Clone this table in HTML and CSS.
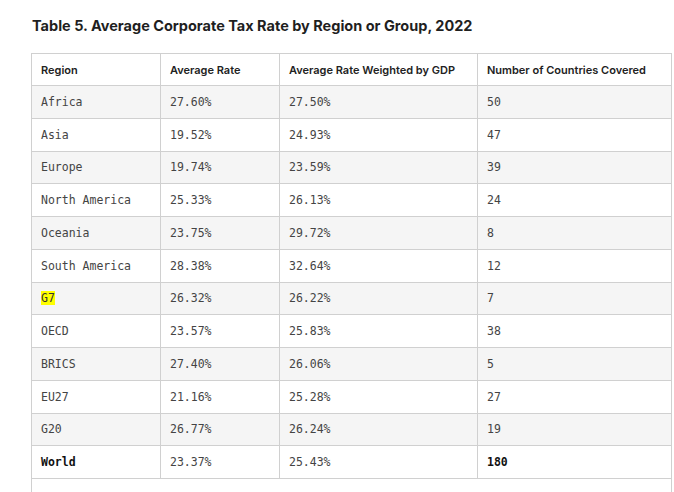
FILE: index.html
```html
<!DOCTYPE html>
<html>
<head>
<meta charset="utf-8">
<link rel="stylesheet" href="styles.css">
</head>
<body>
<div class="wrap">
  <h3 class="title">Table 5. Average Corporate Tax Rate by Region or Group, 2022</h3>
  <table class="data">
    <colgroup>
      <col class="c1"><col class="c2"><col class="c3"><col class="c4">
    </colgroup>
    <thead>
      <tr><th>Region</th><th>Average Rate</th><th>Average Rate Weighted by GDP</th><th>Number of Countries Covered</th></tr>
    </thead>
    <tbody>
      <tr><td>Africa</td><td>27.60%</td><td>27.50%</td><td>50</td></tr>
      <tr><td>Asia</td><td>19.52%</td><td>24.93%</td><td>47</td></tr>
      <tr><td>Europe</td><td>19.74%</td><td>23.59%</td><td>39</td></tr>
      <tr><td>North America</td><td>25.33%</td><td>26.13%</td><td>24</td></tr>
      <tr><td>Oceania</td><td>23.75%</td><td>29.72%</td><td>8</td></tr>
      <tr><td>South America</td><td>28.38%</td><td>32.64%</td><td>12</td></tr>
      <tr><td><span class="hl">G7</span></td><td>26.32%</td><td>26.22%</td><td>7</td></tr>
      <tr><td>OECD</td><td>23.57%</td><td>25.83%</td><td>38</td></tr>
      <tr><td>BRICS</td><td>27.40%</td><td>26.06%</td><td>5</td></tr>
      <tr><td>EU27</td><td>21.16%</td><td>25.28%</td><td>27</td></tr>
      <tr><td>G20</td><td>26.77%</td><td>26.24%</td><td>19</td></tr>
      <tr class="total"><td><b>World</b></td><td>23.37%</td><td>25.43%</td><td><b>180</b></td></tr>
      <tr class="note"><td colspan="4"></td></tr>
    </tbody>
  </table>
</div>
</body>
</html>
```
FILE: styles.css
```css
html, body {
  margin: 0;
  padding: 0;
  background: #ffffff;
}
.wrap {
  padding: 0 0 0 31px;
}
.title {
  margin: 0;
  padding: 19px 0 0 1px;
  height: 53px;
  box-sizing: border-box;
  font-family: Inter, "Noto Sans", sans-serif;
  font-weight: 700;
  font-size: 14.5px;
  line-height: 14px;
  color: #1f1f1f;
}
.data {
  border-collapse: collapse;
  width: 640px;
  table-layout: fixed;
}
.c1 { width: 129px; }
.c2 { width: 119px; }
.c3 { width: 198px; }
.c4 { width: 194px; }
.data th, .data td {
  border: 1px solid #d0d0d0;
  text-align: left;
  padding: 0 9px;
  vertical-align: middle;
}
.data th {
  height: 31px;
  font-family: Inter, Roboto, sans-serif;
  font-weight: 600;
  font-size: 11px;
  color: #222;
}
.data td {
  height: 31.75px;
  font-family: "DejaVu Sans Mono", monospace;
  font-size: 11.5px;
  color: #444;
}
.data tbody tr:nth-child(odd) td {
  background: #f5f5f5;
}
.data tbody tr.note td {
  background: #fff;
  height: 30px;
}
.data td b {
  color: #111;
  font-weight: 700;
}
.hl {
  background: #ffff00;
  color: #333;
}
```
